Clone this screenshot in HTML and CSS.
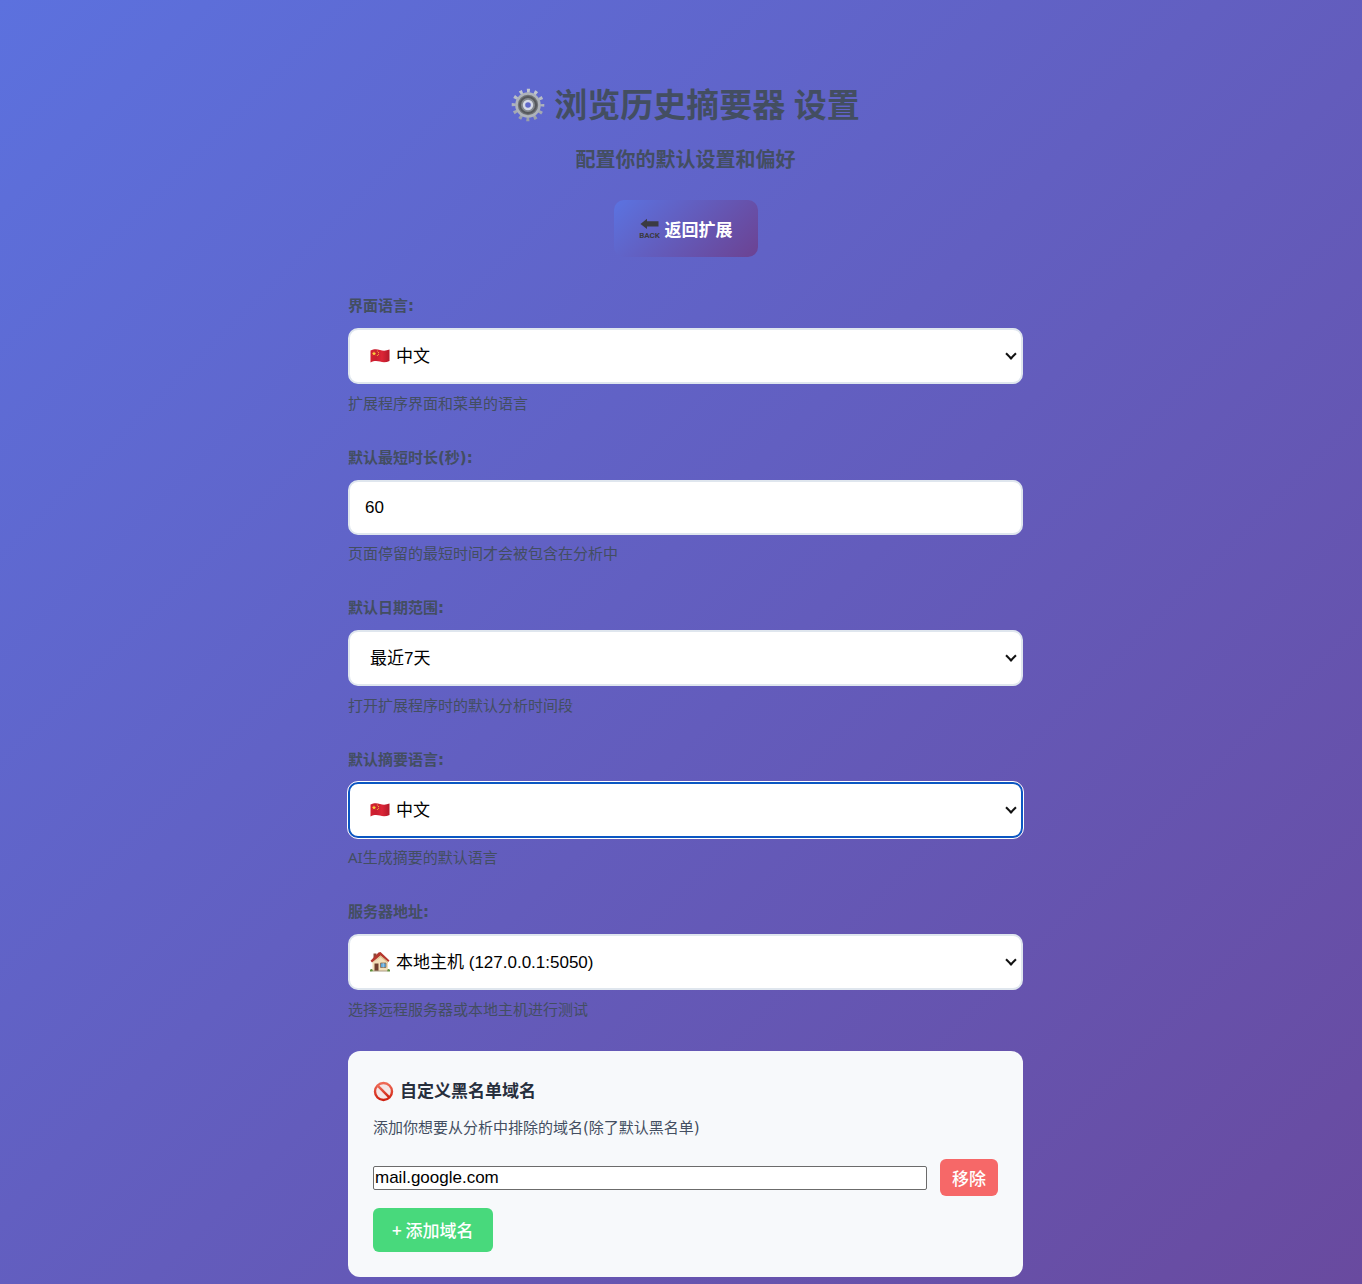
FILE: index.html
```html
<!DOCTYPE html>
<html lang="zh-CN">
<head>
<meta charset="utf-8">
<meta name="viewport" content="width=device-width, initial-scale=1">
<title>浏览历史摘要器 设置</title>
<link rel="stylesheet" href="styles.css">
</head>
<body>
<svg class="defs" aria-hidden="true">
  <defs>
    <linearGradient id="metal" x1="0" y1="0" x2="0" y2="1">
      <stop offset="0" stop-color="#c3c8cf"/><stop offset="1" stop-color="#9a9fa8"/>
    </linearGradient>
    <linearGradient id="red" x1="0" y1="0" x2="1" y2="0">
      <stop offset="0" stop-color="#d5202f"/><stop offset=".3" stop-color="#c81d30"/><stop offset=".6" stop-color="#dc2637"/><stop offset="1" stop-color="#b3182a"/>
    </linearGradient>
    <linearGradient id="ban" x1="0" y1="0" x2="0" y2="1">
      <stop offset="0" stop-color="#ee6a56"/><stop offset="1" stop-color="#cf200f"/>
    </linearGradient>
    <symbol id="flag" viewBox="0 0 20 16">
      <path d="M.5 2.500C4 .8 7 1 10 2s6 1 9.500-.4v11.400c-3 1.400-6.500 1.500-9.500.6s-6-1-9.500.8z" fill="url(#red)"/>
      <path d="M4 3.300l.6 1.500 1.600.1-1.200 1 .4 1.600L4 6.600l-1.300.9.4-1.600-1.300-1 1.600-.1z" fill="#f8d33c"/>
      <g fill="#f8d33c"><circle cx="7.300" cy="3" r=".5"/><circle cx="8.500" cy="4.400" r=".5"/><circle cx="8.500" cy="6.200" r=".5"/><circle cx="7.300" cy="7.500" r=".5"/></g>
    </symbol>
  </defs>
</svg>
<main class="container">
  <header class="header">
    <h1 class="title">
      <svg class="gear" viewBox="0 0 34 34" aria-hidden="true">
        <circle cx="17" cy="17" r="14.300" fill="none" stroke="url(#metal)" stroke-width="4" stroke-dasharray="3 4.487" stroke-dashoffset="1.500"/>
        <circle cx="17" cy="17" r="11.500" fill="#6f7276" stroke="#aeb3ba" stroke-width="2.600"/>
        <circle cx="17" cy="17" r="8" fill="#85898f" stroke="#55585c" stroke-width="2"/>
        <circle cx="17" cy="17" r="4" fill="#6068ca" stroke="#d5d9e6" stroke-width="2.400"/>
      </svg>
      <span>浏览历史摘要器 设置</span>
    </h1>
    <p class="subtitle">配置你的默认设置和偏好</p>
    <button class="back" type="button">
      <svg class="back-icon" viewBox="0 0 21 21" aria-hidden="true">
        <path d="M1.500 6 8 .8v2.400h11.500v5.200H8v2.600z" fill="#3b3b42"/>
        <text x="10.500" y="19.500" text-anchor="middle" class="back-word">BACK</text>
      </svg>
      <span>返回扩展</span>
    </button>
  </header>

  <form>
    <div class="fields">
      <div class="field">
        <label class="label" for="ui-lang">界面语言:</label>
        <div class="picker picker-icon">
          <svg class="emoji" viewBox="0 0 20 16" aria-hidden="true"><use href="#flag"/></svg>
          <select class="control" id="ui-lang"><option>中文</option></select>
        </div>
        <p class="hint">扩展程序界面和菜单的语言</p>
      </div>
      <div class="field">
        <label class="label" for="duration">默认最短时长(秒):</label>
        <input class="control" id="duration" type="text" inputmode="numeric" value="60">
        <p class="hint">页面停留的最短时间才会被包含在分析中</p>
      </div>
      <div class="field">
        <label class="label" for="range">默认日期范围:</label>
        <div class="picker">
          <select class="control" id="range"><option>最近7天</option></select>
        </div>
        <p class="hint">打开扩展程序时的默认分析时间段</p>
      </div>
      <div class="field">
        <label class="label" for="summary-lang">默认摘要语言:</label>
        <div class="picker picker-icon">
          <svg class="emoji" viewBox="0 0 20 16" aria-hidden="true"><use href="#flag"/></svg>
          <select class="control active" id="summary-lang"><option>中文</option></select>
        </div>
        <p class="hint">AI生成摘要的默认语言</p>
      </div>
      <div class="field">
        <label class="label" for="server">服务器地址:</label>
        <div class="picker picker-icon">
          <svg class="emoji" viewBox="0 0 20 20" aria-hidden="true">
            <path d="M3.500 1.500h3V7h-3z" fill="#8d4938"/>
            <path d="M2.500 9.500 10.500 2 18 9v10H2.500z" fill="#f3dfb9"/>
            <path d="M10.500 0 19.500 8.600l-1.300 1.300-7.700-6.500L2 10.500.5 8.800 8.500.6z" fill="#b5382f"/>
            <path d="M10.500 3.500 18 9.800v1.400l-7.500-6.300-7.500 6z" fill="#d9bd8b"/>
            <path d="M4.500 11.500h4V19h-4z" fill="#71402f"/>
            <path d="M10.500 11h5.500v4.500h-5.500z" fill="#5ba5d9" stroke="#8b6b4c" stroke-width=".8"/>
            <path d="M13.200 11v4.500" stroke="#d9ecf6" stroke-width=".6"/>
            <path d="M0 18c.8-1.500 2-1.500 2.800 0v1.500H0zM17.200 18c.8-1.500 2-1.500 2.800 0v1.500h-2.800z" fill="#5f8f3c"/>
            <path d="M3 18.500h14.500v1H3z" fill="#a99a82"/>
          </svg>
          <select class="control" id="server"><option>本地主机 (127.0.0.1:5050)</option></select>
        </div>
        <p class="hint">选择远程服务器或本地主机进行测试</p>
      </div>
    </div>

    <section class="card">
      <h2 class="card-title">
        <svg class="ban" viewBox="0 0 21 21" aria-hidden="true">
          <circle cx="10.500" cy="10.500" r="8.500" fill="#f4e6e6" stroke="url(#ban)" stroke-width="2.400"/>
          <path d="M4.700 4.700l11.600 11.600" stroke="url(#ban)" stroke-width="2.400"/>
        </svg>
        <span>自定义黑名单域名</span>
      </h2>
      <p class="card-text">添加你想要从分析中排除的域名(除了默认黑名单)</p>
      <div class="domain-row">
        <input class="domain" type="text" aria-label="域名" value="mail.google.com">
        <button class="remove" type="button">移除</button>
      </div>
      <button class="add" type="button">+ 添加域名</button>
    </section>
  </form>
</main>
</body>
</html>
```
FILE: styles.css
```css
*,
*::after {
  box-sizing: border-box;
  margin: 0;
}

body {
  min-height: 100vh;
  padding: 75px 16px 7px 25px;
  background: linear-gradient(135deg, #5c71de 0%, #694a9f 100%);
  color: #434e61;
  font-family: "Noto Sans", "Noto Sans CJK SC", sans-serif;
  line-height: 24px;
}

.defs {
  position: absolute;
  width: 0;
  height: 0;
}

.container {
  max-width: 675px;
  margin: 0 auto;
}

.header {
  display: flex;
  flex-direction: column;
  align-items: center;
  margin-bottom: 37px;
}

.title {
  display: flex;
  align-items: center;
  gap: 9px;
  margin-bottom: 10px;
  font-size: 33px;
  line-height: 60px;
}

.gear {
  width: 34px;
  height: 34px;
}

.subtitle {
  margin-bottom: 25px;
  font-size: 20px;
  font-weight: 600;
  line-height: 30px;
}

.back {
  display: flex;
  align-items: center;
  gap: 5px;
  height: 57px;
  padding: 0 25px;
  border: 0;
  border-radius: 10px;
  background: linear-gradient(135deg, #5b73e1 0%, #6c4292 100%);
  color: #fff;
  font: 700 17px "Noto Sans", "Noto Sans CJK SC", sans-serif;
}

.back-icon {
  width: 21px;
  height: 21px;
}

.back-word {
  fill: #3b3b42;
  font: 700 8px Roboto, sans-serif;
}

.fields {
  display: grid;
  gap: 31px;
  margin-bottom: 30px;
}

.label {
  display: block;
  margin-bottom: 10px;
  font: 700 15px/24px "DejaVu Sans", "Noto Sans CJK SC", sans-serif;
}

.picker {
  position: relative;
}

.picker::after {
  content: "";
  position: absolute;
  top: 22px;
  right: 8px;
  width: 8px;
  height: 8px;
  border: solid #111;
  border-width: 0 2px 2px 0;
  transform: rotate(45deg);
  pointer-events: none;
}

.control {
  display: block;
  width: 100%;
  height: 55px;
  padding: 0 15px;
  border: 2px solid #dfe6ee;
  border-radius: 10px;
  background: #fff;
  color: #000;
  font: 17px "Liberation Sans", "Noto Sans CJK SC", sans-serif;
}

.picker .control {
  height: 56px;
  padding: 0 20px;
  appearance: none;
}

.picker-icon .control {
  padding-left: 46px;
}

.control.active {
  border-color: #0b57c2;
  outline: 1px solid #fff;
}

.emoji {
  position: absolute;
  top: 18px;
  left: 22px;
  width: 20px;
  height: 20px;
}

.hint {
  margin-top: 7px;
  font-size: 15px;
}

.control + .hint {
  margin-top: 6px;
}

.card {
  padding: 25px;
  border-radius: 12px;
  background: #f7f9fb;
}

.card-title {
  display: flex;
  align-items: center;
  gap: 6px;
  margin-bottom: 10px;
  color: #272f3d;
  font-size: 17px;
  line-height: 30px;
}

.ban {
  width: 21px;
  height: 21px;
}

.card-text {
  margin-bottom: 19px;
  font: 15px/24px "DejaVu Sans", "Noto Sans CJK SC", sans-serif;
}

.domain-row {
  display: flex;
  align-items: center;
  gap: 13px;
  margin-bottom: 12px;
}

.domain {
  flex: 1;
  min-width: 0;
  height: 24px;
  padding: 1px;
  border: 1px solid #6b6b6b;
  border-radius: 2px;
  background: #fff;
  color: #000;
  font: 17px "Liberation Sans", sans-serif;
}

.remove,
.add {
  border: 0;
  border-radius: 6px;
  color: #fff;
  font: 500 17px/24px "Noto Sans CJK SC", sans-serif;
}

.remove {
  height: 37px;
  padding: 0 12px;
  background: #f66868;
}

.add {
  height: 44px;
  padding: 0 19px;
  background: #48d97c;
}
```
